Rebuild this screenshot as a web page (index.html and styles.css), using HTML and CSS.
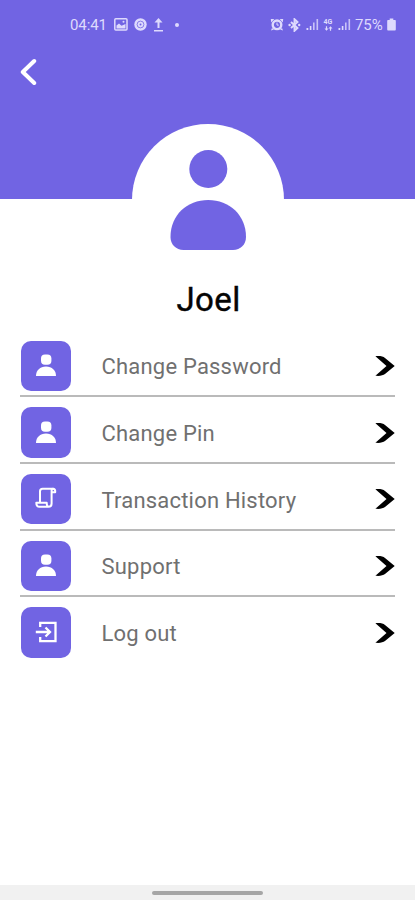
FILE: index.html
```html
<!DOCTYPE html>
<html lang="en">
<head>
<meta charset="utf-8">
<title>Profile</title>
<link rel="stylesheet" href="styles.css">
</head>
<body>
<svg class="defs" width="0" height="0" aria-hidden="true">
  <symbol id="person" viewBox="0 0 22 24">
    <rect x="6" y="1.5" width="10.4" height="10.2" rx="4"/>
    <path d="M1 23C1 17.5 5 13.6 11 13.6S21 17.5 21 23Z"/>
  </symbol>
  <symbol id="chevron" viewBox="0 0 20 22">
    <path d="M.4 1.200C5 .8 8 1.400 10 2.900L19.700 11L10 19.100C8 20.600 5 21.200 .4 20.800L11.500 11Z"/>
  </symbol>
  <symbol id="signal" viewBox="0 0 13 13">
    <path d="M.5 10h1.800v2H.5zM3.800 8h1.600v4H3.800z"/>
    <path d="M7 4.500h1.600V12H7zM10.500 1h1.600v11h-1.600z" opacity=".8"/>
  </symbol>
</svg>
<div class="screen">
  <header class="header">
    <div class="status">
      <div class="status-left">
        <span class="clock">04:41</span>
        <svg width="14" height="13" viewBox="0 0 14 13"><rect x=".8" y=".8" width="12.200" height="11.200" rx="1" fill="none" stroke="currentColor" stroke-width="1.500"/><path d="M2.500 10.500v-3l2.500-2 2.500 2.200L11.500 6v4.500z"/><circle cx="9.500" cy="3.800" r="1"/></svg>
        <svg width="13" height="13" viewBox="0 0 13 13"><circle cx="6.500" cy="6.500" r="6.200"/><circle cx="6.500" cy="6.500" r="3.400" fill="none" stroke="#7164e3" stroke-width=".8"/><circle cx="6.500" cy="6.500" r="1" fill="#7164e3"/></svg>
        <svg width="11" height="14" viewBox="0 0 11 14"><path d="M5.500 0L9.500 4.500H6.500v5.500H4.500V4.500H1.500zM1 12h9v1.500H1z"/></svg>
        <i class="dot"></i>
      </div>
      <div class="status-right">
        <svg width="14" height="13" viewBox="0 0 14 13"><path d="M.8 1h3.500L1.200 4.500zM13.200 1H9.700l3.100 3.500zM2 10l-1 2.500 3-1zM12 10l1 2.500-3-1z"/><circle cx="7" cy="6.800" r="4.300" fill="none" stroke="currentColor" stroke-width="2.400"/><path d="M7 4.500v2.600h1.800" fill="none" stroke="currentColor"/></svg>
        <svg class="bt" width="13" height="14" viewBox="0 0 13 14"><path d="M3 4l6.500 6L6.500 12.800V1.200L9.500 4 3 10" fill="none" stroke="currentColor" stroke-width="1.900"/><circle cx="1.600" cy="7" r="1.200"/><circle cx="11.200" cy="7" r="1.200"/></svg>
        <svg class="sig" width="13" height="13"><use href="#signal"/></svg>
        <span class="net"><b>4G</b><svg width="9" height="5" viewBox="0 0 9 5"><path d="M2.500 4.800L.5 2.600h1.400V.3h1.200v2.300h1.400zM6.500.2l2 2.200H7.100v2.300H5.900V2.400H4.500z"/></svg></span>
        <svg class="sig" width="13" height="13"><use href="#signal"/></svg>
        <span class="percent">75%</span>
        <svg width="9" height="13" viewBox="0 0 9 13"><path d="M2.700.5h3.600V2H8q.8 0 .8.800v8.700q0 1-.8 1H1q-.8 0-.8-1V2.800Q.2 2 1 2h1.700z"/></svg>
      </div>
    </div>
    <svg class="back" width="18" height="28" viewBox="0 0 18 28"><path d="M15.200 3L3.800 14 15.200 25" fill="none" stroke="currentColor" stroke-width="4" stroke-linecap="round" stroke-linejoin="round"/></svg>
  </header>
  <div class="avatar">
    <svg width="152" height="152" viewBox="0 0 152 152"><circle cx="76.300" cy="45" r="19"/><path d="M38.500 113C38.500 91 55 76 76.200 76S114 91 114 113C114 120.500 108.500 126 101 126H51.500C44 126 38.500 120.500 38.500 113Z"/></svg>
  </div>
  <h1 class="name">Joel</h1>
  <nav class="menu">
    <div class="row"><span class="tile"><svg width="22" height="24"><use href="#person"/></svg></span><span class="label">Change Password</span><svg class="chev" width="20" height="22"><use href="#chevron"/></svg></div>
    <div class="row"><span class="tile"><svg width="22" height="24"><use href="#person"/></svg></span><span class="label">Change Pin</span><svg class="chev" width="20" height="22"><use href="#chevron"/></svg></div>
    <div class="row"><span class="tile"><svg width="22" height="22" viewBox="0 0 22 22"><path d="M5 15V4.300Q5 1.700 7.600 1.700H18Q20.200 1.900 20.200 4V5.200H16.600V16.500Q16.600 19.800 13.500 19.800H4.500Q1.300 19.800 1.300 15.700H11.700Q11.700 19.800 13.700 19.800M16.600 5V3.800Q16.600 1.700 18.300 1.700" fill="none" stroke="currentColor" stroke-width="2" stroke-linejoin="round"/></svg></span><span class="label">Transaction History</span><svg class="chev" width="20" height="22"><use href="#chevron"/></svg></div>
    <div class="row"><span class="tile"><svg width="22" height="24"><use href="#person"/></svg></span><span class="label">Support</span><svg class="chev" width="20" height="22"><use href="#chevron"/></svg></div>
    <div class="row"><span class="tile"><svg width="22" height="22" viewBox="0 0 22 22"><path d="M5.200 6V1.900H20.500V20.100H5.200V16M.8 11H14.500M10.500 6.500L15 11 10.500 15.500" fill="none" stroke="currentColor" stroke-width="2.300"/></svg></span><span class="label">Log out</span><svg class="chev" width="20" height="22"><use href="#chevron"/></svg></div>
  </nav>
  <footer class="navbar"><i class="handle"></i></footer>
</div>
</body>
</html>
```
FILE: styles.css
```css
* { box-sizing: border-box; }
body { margin: 0; background: #fff; font-family: Roboto, "Liberation Sans", sans-serif; }
svg { display: block; fill: currentColor; flex: none; }
.defs { position: absolute; }
.screen { width: 415px; height: 900px; display: flex; flex-direction: column; overflow: hidden; }
.header { height: 199px; flex: none; background: #7164e3; color: #fff; }
.status { height: 49px; padding: 0 19px 0 70px; display: flex; justify-content: space-between; align-items: center; color: #dedafd; font-size: 15px; }
.status-left, .status-right { display: flex; align-items: center; }
.clock { width: 44px; letter-spacing: -.1px; }
.status-left svg { margin-right: 6px; }
.dot { width: 4px; height: 4px; margin-left: 5px; border-radius: 50%; background: currentColor; }
.status-right .bt { margin-left: 4px; }
.sig { margin-left: 5px; }
.net { width: 10px; margin-left: 4px; display: flex; flex-direction: column; align-items: center; }
.net b { font-size: 7px; line-height: 7px; }
.percent { width: 29px; margin: 0 3px 0 4px; letter-spacing: -.1px; }
.back { margin: 9px 0 0 19px; }
.avatar { width: 152px; height: 152px; flex: none; margin: -75.500px 0 0 132px; border-radius: 50%; background: #fff; color: #7164e3; }
.name { margin: 4px 0 0; padding-left: 2px; font-size: 33px; line-height: 40px; font-weight: 400; -webkit-text-stroke: .4px #050505; text-align: center; color: #050505; letter-spacing: .4px; }
.menu { margin: 11px 20px 0; }
.row { height: 66.7px; padding-top: 6px; display: flex; align-items: center; border-bottom: 2px solid #bababa; }
.row:last-child { border-bottom-color: transparent; }
.tile { width: 50.500px; height: 50.500px; margin: 0 30.500px 0 .5px; display: flex; align-items: center; justify-content: center; border-radius: 10px; background: #7164e3; color: #fff; }
.tile svg { margin-bottom: 2px; }
.label { flex: 1; padding-top: 3px; font-size: 22px; line-height: 28px; letter-spacing: .2px; color: #707070; }
.chev { color: #000; }
.navbar { height: 15px; margin-top: auto; background: #f1f1f1; display: flex; justify-content: center; align-items: center; }
.handle { width: 111px; height: 4px; border-radius: 2px; background: #a6a6a6; }
```
